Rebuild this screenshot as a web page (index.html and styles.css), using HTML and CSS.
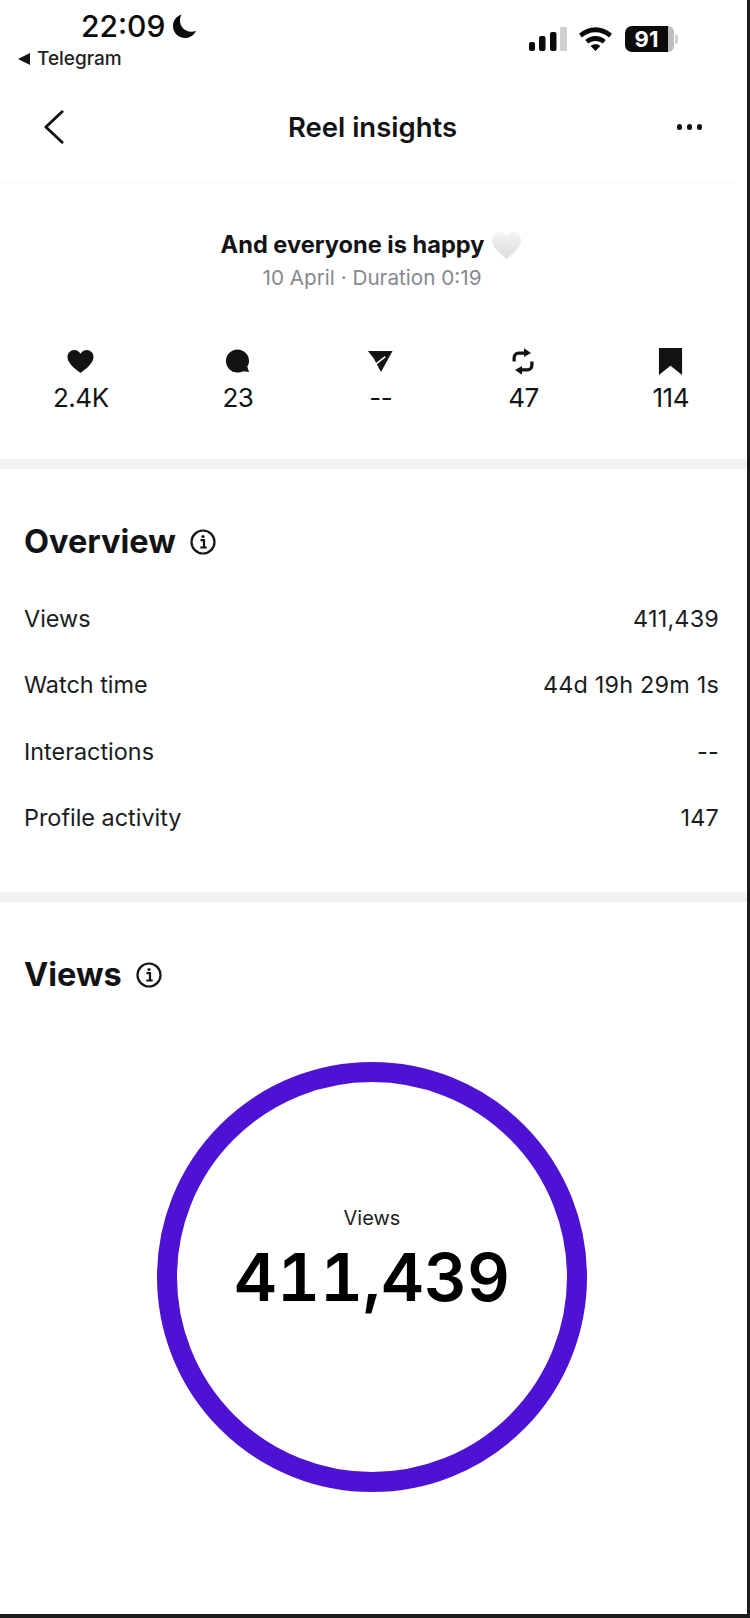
FILE: index.html
```html
<!DOCTYPE html>
<html lang="en">
<head>
<meta charset="utf-8">
<title>Reel insights</title>
<link rel="stylesheet" href="styles.css">
</head>
<body>
<main class="screen">
  <div class="status">
    <div class="status-left">
      <div class="clock"><span>22:09</span>
        <svg class="moon" viewBox="0 0 26 26"><path d="M9.500 1.500C4.600 3 1 7.500 1 13c0 6.600 5.400 12 12 12 5 0 9.200-3 11-7.300-1.500.7-3.100 1-4.800 1C12.900 18.700 8 13.800 8 7.500c0-2.200.5-4.200 1.500-6z"/></svg>
      </div>
      <div class="back-app"><svg class="tri" viewBox="0 0 12 12"><path d="M0 6 12 0v12z"/></svg><span>Telegram</span></div>
    </div>
    <div class="status-right">
      <svg class="signal" viewBox="0 0 38 24"><rect x="0" y="15" width="6" height="9" rx="2"/><rect x="10" y="9" width="6.500" height="15" rx="2"/><rect x="21" y="5" width="6.500" height="19" rx="2"/><rect x="31" y="0" width="7" height="24" rx="1" class="dim"/></svg>
      <svg class="wifi" viewBox="0 0 34 24"><path d="M17 0C10.500 0 5 2.500 0 6.500l3 4C7 7 11.500 5 17 5s10 2 14 5.500l3-4C29 2.500 23.500 0 17 0z"/><path d="M17 9c-4 0-7.500 1.500-10.500 4l3 3.700C11.500 15 14 14 17 14s5.500 1 7.500 2.700l3-3.700C24.500 10.500 21 9 17 9z"/><path d="M17 17.500c-2 0-3.500.6-5 1.800l5 5 5-5c-1.500-1.200-3-1.800-5-1.800z"/></svg>
      <div class="battery"><span class="battery-body">91</span><span class="battery-tip"></span><span class="battery-cap"></span></div>
    </div>
  </div>

  <header class="topbar">
    <svg class="chevron" viewBox="0 0 22 36"><path d="M20 2 3 18l17 16"/></svg>
    <h1>Reel insights</h1>
    <div class="dots"><i></i><i></i><i></i></div>
  </header>

  <section class="post">
    <div class="caption"><span>And everyone is happy</span>
      <svg class="white-heart" viewBox="0 0 30 28"><defs><linearGradient id="wh" x1="0" y1="0" x2="0" y2="1"><stop offset="0" stop-color="#f4f4f4"/><stop offset="1" stop-color="#dcdcdc"/></linearGradient></defs><path fill="url(#wh)" d="M15 28C8 22 0 16 0 8.500 0 3.500 3.500 0 8 0c3 0 5.500 1.500 7 4.500C16.500 1.500 19 0 22 0c4.500 0 8 3.500 8 8.500C30 16 22 22 15 28z"/></svg>
    </div>
    <p class="meta">10 April · Duration 0:19</p>
    <div class="stats">
      <div class="stat">
        <svg class="icon" viewBox="0 0 28 28"><path d="M14 26C8 21.500 .5 16 .5 9.200.5 5 3.700 2 7.500 2c2.800 0 5.100 1.500 6.500 4 1.400-2.500 3.700-4 6.500-4 3.800 0 7 3 7 7.200C27.500 16 20 21.500 14 26z"/></svg>
        <span>2.4K</span>
      </div>
      <div class="stat">
        <svg class="icon" viewBox="0 0 28 28"><path d="M14 1.500C7.400 1.500 2 6.900 2 13.500s5.400 12 12 12c2.100 0 4.100-.5 5.800-1.500l6.200 1-1.900-5.800c1.200-1.800 1.900-3.900 1.900-5.700 0-6.600-5.400-12-12-12z"/></svg>
        <span>23</span>
      </div>
      <div class="stat">
        <svg class="icon" viewBox="0 0 28 28"><path d="M1 3h25.500L14.500 25 7 11z"/><path class="slit" d="M9.500 16.500 19 9"/></svg>
        <span>--</span>
      </div>
      <div class="stat">
        <svg class="icon" viewBox="0 0 28 28"><path class="repost" d="M4.300 14v-4a4.700 4.700 0 0 1 4.700-4.700h7"/><path class="repost" d="M22.700 14v4a4.700 4.700 0 0 1-4.700 4.700h-7"/><path d="M14.500.3 21.800 5.300 14.500 9.300zM12.500 27.700 5.200 22.700 12.500 18.700z"/></svg>
        <span>47</span>
      </div>
      <div class="stat">
        <svg class="icon" viewBox="0 0 28 28"><path d="M2 0h24v28l-12-9.500L2 28z"/></svg>
        <span>114</span>
      </div>
    </div>
  </section>

  <section class="overview">
    <div class="heading"><h2>Overview</h2>
      <svg class="info" viewBox="0 0 26 26"><circle cx="13" cy="13" r="11.500"/><circle class="info-dot" cx="13" cy="7.500" r="1.600"/><path d="M10.500 11.200H14v7M10.300 18.500h6.400"/></svg>
    </div>
    <ul class="rows">
      <li><span>Views</span><span class="value">411,439</span></li>
      <li><span>Watch time</span><span class="value">44d 19h 29m 1s</span></li>
      <li><span>Interactions</span><span class="value">--</span></li>
      <li><span>Profile activity</span><span class="value">147</span></li>
    </ul>
  </section>

  <section class="views">
    <div class="heading"><h2>Views</h2>
      <svg class="info" viewBox="0 0 26 26"><circle cx="13" cy="13" r="11.500"/><circle class="info-dot" cx="13" cy="7.500" r="1.600"/><path d="M10.500 11.200H14v7M10.300 18.500h6.400"/></svg>
    </div>
    <div class="ring">
      <span class="ring-label">Views</span>
      <span class="ring-value">411,439</span>
    </div>
  </section>
</main>
</body>
</html>
```
FILE: styles.css
```css
* { box-sizing: border-box; }
html, body { margin: 0; padding: 0; }
body { background: #1c1c1c; width: 750px; height: 1618px; overflow: hidden; font-family: Inter, "Liberation Sans", sans-serif; color: #111315; }
.screen { width: 747px; height: 1614px; background: #fff; display: flex; flex-direction: column; }

.status { height: 80px; display: flex; justify-content: space-between; flex: none; }
.status-left { padding: 9px 0 0 18px; }
.clock { display: flex; align-items: center; gap: 7px; padding-left: 63px; font-size: 30px; line-height: 34px; font-weight: 500; color: #0b0b0b; }
.moon { width: 26px; height: 26px; fill: #0b0b0b; margin-top: -1px; }
.back-app { display: flex; align-items: center; gap: 7px; margin-top: 4px; font-size: 19px; line-height: 24px; font-weight: 500; color: #222; }
.tri { width: 12px; height: 12px; fill: #111; }
.status-right { display: flex; align-items: flex-start; padding: 26px 69px 0 0; }
.signal { width: 38px; height: 24px; fill: #0b0b0b; margin-top: 1px; }
.signal .dim { fill: #cfcfcf; }
.wifi { width: 33px; height: 24px; fill: #0b0b0b; margin: 1px 0 0 12px; }
.battery { display: flex; align-items: center; margin-left: 13px; }
.battery-body { width: 43px; height: 26px; background: #0b0b0b; color: #fff; border-radius: 7px 0 0 7px; font-size: 22px; line-height: 26px; font-weight: 700; text-align: center; }
.battery-tip { width: 6px; height: 26px; background: #bdbdbd; border-radius: 0 7px 7px 0; }
.battery-cap { width: 3px; height: 10px; margin-left: 1px; background: #d0d0d0; border-radius: 0 3px 3px 0; }

.topbar { height: 104px; flex: none; display: grid; grid-template-columns: 1fr auto 1fr; align-items: center; padding: 0 43px 6px; border-bottom: 4px solid #fafafa; margin-right: 12px; }
.chevron { width: 21px; height: 36px; fill: none; stroke: #111; stroke-width: 3; stroke-linecap: round; stroke-linejoin: round; }
.topbar h1 { margin: 0 0 0 10px; font-size: 27.500px; line-height: 34px; font-weight: 600; }
.dots { justify-self: end; display: flex; gap: 4.500px; margin-right: -10px; }
.dots i { width: 5.500px; height: 5.500px; border-radius: 50%; background: #111; }

.post { height: 285px; flex: none; display: flex; flex-direction: column; align-items: center; border-bottom: 10px solid #f0f2f3; padding-top: 46px; }
.caption { display: flex; align-items: center; gap: 8px; font-size: 23.600px; line-height: 30px; font-weight: 700; margin-right: 5px; }
.white-heart { width: 29px; height: 27px; }
.meta { margin: 4px 3px 0 0; font-size: 20.700px; line-height: 28px; color: #85898d; }
.stats { align-self: stretch; display: flex; justify-content: space-between; padding: 0 58px 0 53px; margin-top: 56px; }
.stat { display: flex; flex-direction: column; align-items: center; font-size: 26px; line-height: 32px; letter-spacing: -0.500px; }
.stat span { display: block; margin-top: 7px; }
.icon { width: 27px; height: 27px; fill: #111315; display: block; }
.repost { fill: none; stroke: #111315; stroke-width: 3.400; }
.slit { fill: none; stroke: #fff; stroke-width: 1.500; }

.overview { height: 433px; flex: none; border-bottom: 10px solid #f0f2f3; padding: 51px 28px 0 24px; }
.heading { display: flex; align-items: center; gap: 14px; }
h2 { margin: 0; font-size: 32.500px; line-height: 44px; font-weight: 700; }
.info { width: 26px; height: 26px; fill: none; stroke: #111315; stroke-width: 2.200; }
.info-dot { fill: #111315; stroke: none; }
.rows { list-style: none; margin: 21px 0 0; padding: 0; }
.rows li { display: flex; justify-content: space-between; align-items: center; height: 66.500px; font-size: 23.400px; color: #1a1c1e; }
.value { letter-spacing: 0.200px; }

.views { flex: 1; display: flex; flex-direction: column; padding: 51px 0 0 24px; }
.ring { width: 430px; height: 430px; margin: 65px 0 0 133px; border: 20px solid #4d12d4; border-radius: 50%; display: flex; flex-direction: column; align-items: center; }
.ring-label { margin-top: 123px; font-size: 20px; line-height: 26px; color: #222; }
.ring-value { margin-top: 2px; font-size: 66.500px; line-height: 88px; font-weight: 600; color: #000; font-variant-numeric: tabular-nums; }
```
